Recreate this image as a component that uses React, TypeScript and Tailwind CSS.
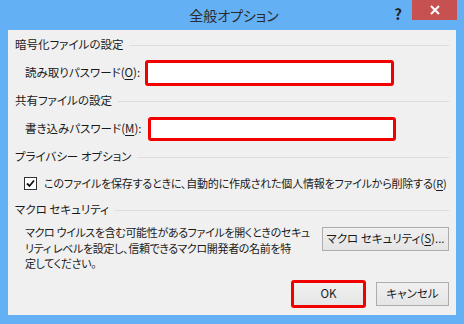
import React from 'react';

const font = { fontFamily: '"Noto Sans CJK JP", "Noto Sans", sans-serif', fontFeatureSettings: '"palt"' };

function GroupHeader({ title }: { title: string }) {
  return (
    <div className="flex items-center h-[20px] gap-[6px]">
      <span className="whitespace-nowrap">{title}</span>
      <div className="flex-1 h-px bg-[#dcdcdc]" />
    </div>
  );
}

function Mnemonic({ k }: { k: string }) {
  return (
    <>
      (<span className="underline underline-offset-2">{k}</span>)
    </>
  );
}

export default function App() {
  return (
    <div
      className="w-[464px] h-[324px] bg-[#64b0f4] flex flex-col px-[8px] pb-[9px] text-[11.5px] text-[#1a1a1a] leading-none"
      style={font}
    >
      {/* title bar */}
      <div className="relative h-[30px] flex items-center justify-center shrink-0">
        <span className="text-[14px] text-[#2b2b2b] pl-[4px]">全般オプション</span>
        <span className="absolute right-[54px] top-[6px] text-[15px] font-bold text-[#222]">?</span>
        <div className="absolute right-[-1px] top-0 w-[45px] h-[20px] bg-[#c75050] flex items-center justify-center">
          <svg width="10" height="10" viewBox="0 0 10 10">
            <path d="M1 1 L9 9 M9 1 L1 9" stroke="white" strokeWidth="2" />
          </svg>
        </div>
      </div>

      {/* client area */}
      <div className="flex-1 bg-[#f0f0f0] flex flex-col pl-[7px] pr-[7px]">
        <div className="mt-[5px]">
          <GroupHeader title="暗号化ファイルの設定" />
        </div>
        <div className="mt-[5px] flex items-center">
          <div className="w-[130px] pl-[10px] whitespace-nowrap">
            読み取りパスワード<Mnemonic k="O" />:
          </div>
          <div className="w-[249px] h-[26px] bg-white border-[3px] border-[#f20000] rounded-[3px]" />
        </div>

        <div className="mt-[5px]">
          <GroupHeader title="共有ファイルの設定" />
        </div>
        <div className="mt-[6px] flex items-center">
          <div className="w-[133px] pl-[10px] whitespace-nowrap">
            書き込みパスワード<Mnemonic k="M" />:
          </div>
          <div className="w-[248px] h-[24px] bg-white border-[3px] border-[#f20000] rounded-[3px]" />
        </div>

        <div className="mt-[6px]">
          <GroupHeader title="プライバシー オプション" />
        </div>
        <div className="mt-[10px] flex items-center pl-[9px] gap-[7px]">
          <div className="w-[13px] h-[13px] border border-[#333] bg-white flex items-center justify-center shrink-0">
            <svg width="9" height="9" viewBox="0 0 9 9">
              <path d="M1 4.5 L3.5 7 L8 1.5" stroke="#111" strokeWidth="1.8" fill="none" />
            </svg>
          </div>
          <span className="whitespace-nowrap text-[11px] tracking-[-0.2px]">
            このファイルを保存するときに、自動的に作成された個人情報をファイルから削除する<Mnemonic k="R" />
          </span>
        </div>

        <div className="mt-[10px]">
          <GroupHeader title="マクロ セキュリティ" />
        </div>
        <div className="mt-[5px] flex items-start">
          <p className="pl-[10px] leading-[15.5px] whitespace-nowrap text-[11px] tracking-[-0.35px]">
            マクロ ウイルスを含む可能性があるファイルを開くときのセキュ
            <br />
            リティ レベルを設定し、信頼できるマクロ開発者の名前を特
            <br />
            定してください。
          </p>
          <button className="ml-auto mt-[2px] w-[127px] h-[24px] border border-[#adadad] bg-gradient-to-b from-[#f0f0f0] to-[#e5e5e5] whitespace-nowrap">
            マクロ セキュリティ<Mnemonic k="S" />...
          </button>
        </div>

        <div className="mt-auto mb-[7px] flex justify-end items-center gap-[10px]">
          <div className="w-[75px] h-[28px] border-[3px] border-[#f20000] rounded-[3px] bg-gradient-to-b from-[#f0f0f0] to-[#e5e5e5] flex items-center justify-center">
            OK
          </div>
          <button className="w-[73px] h-[24px] border border-[#adadad] bg-gradient-to-b from-[#f0f0f0] to-[#e5e5e5]">
            キャンセル
          </button>
        </div>
      </div>
    </div>
  );
}
